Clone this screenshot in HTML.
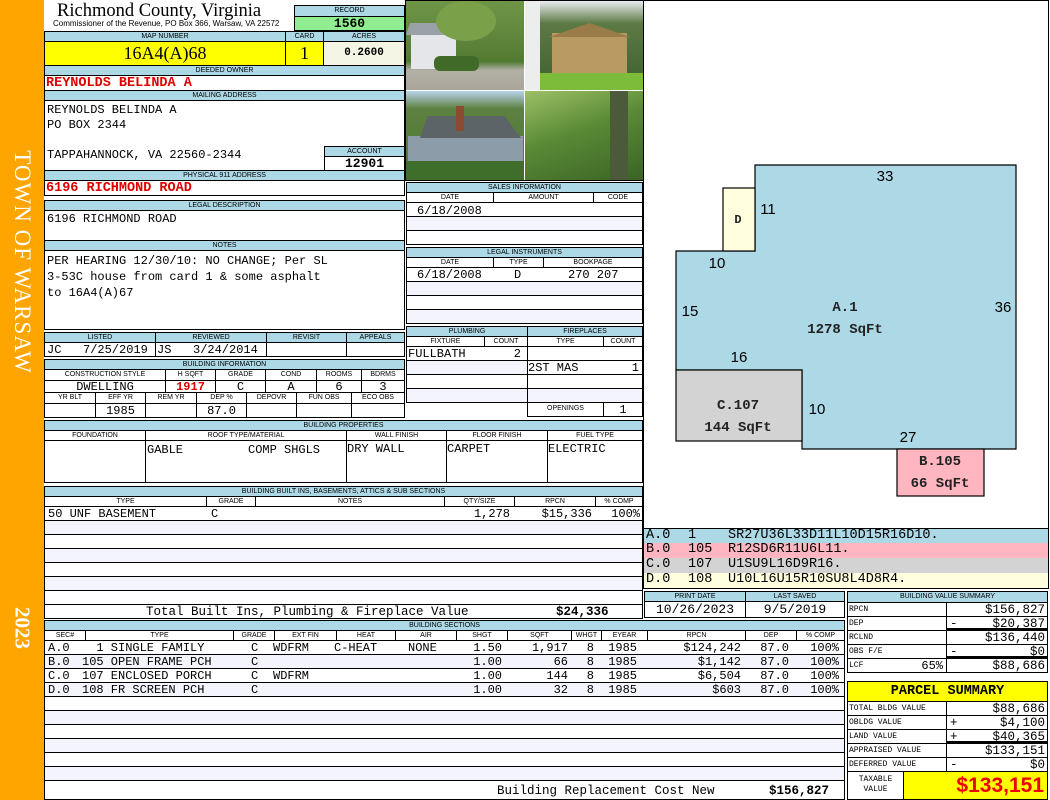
<!DOCTYPE html>
<html><head><meta charset="utf-8"><style>
*{box-sizing:border-box;margin:0;padding:0}
body{width:1050px;height:800px;position:relative;background:#fff;overflow:hidden;font-family:"Liberation Mono",monospace;font-size:12px;color:#000}
div,span{position:absolute}
.h{background:#add8e6;border:1px solid #000;font:7px "Liberation Sans",sans-serif;text-align:center;line-height:9px;height:11px;white-space:nowrap;overflow:hidden}
.c{border:1px solid #000;background:#fff;white-space:pre;line-height:13px;overflow:hidden;font-size:12px}
.s{font:7px "Liberation Sans",sans-serif;text-align:center;line-height:9px;border:1px solid #000;background:#fff;white-space:nowrap;overflow:hidden}
.r{text-align:right}.m{text-align:center}
.red{color:#d00;font-weight:bold}
.alt{background:#f4f4fc}
.row span{top:0;line-height:14px;white-space:pre}
.sl{font-size:8px;line-height:14px;padding-left:1px}
.sv{line-height:14px;padding-right:2px;font-size:12.5px;text-align:right}
</style></head><body>
<div style="left:0;top:0;width:44px;height:800px;background:#ffa500"></div>
<div style="left:22px;top:262px;transform:translate(-50%,-50%) rotate(90deg);color:#fff;font:23px 'Liberation Serif',serif;white-space:nowrap;letter-spacing:1px">TOWN OF WARSAW</div>
<div style="left:22px;top:628px;transform:translate(-50%,-50%) rotate(90deg);color:#fff;font:bold 21px 'Liberation Serif',serif">2023</div>

<!-- header -->
<div style="left:57px;top:0px;font:18.5px 'Liberation Serif',serif;line-height:22px;white-space:nowrap">Richmond County, Virginia</div>
<div style="left:53px;top:19px;font:8px 'Liberation Sans',sans-serif;white-space:nowrap">Commissioner of the Revenue, PO Box 366, Warsaw, VA 22572</div>
<div class="h" style="left:294px;top:5px;width:111px;height:12px">RECORD</div>
<div class="c m" style="left:294px;top:16px;width:111px;height:15px;background:#90ee90;font-weight:bold;line-height:13px;font-size:13px">1560</div>
<div class="h" style="left:44px;top:31px;width:242px">MAP NUMBER</div>
<div class="h" style="left:285px;top:31px;width:39px">CARD</div>
<div class="h" style="left:323px;top:31px;width:82px">ACRES</div>
<div class="c m" style="left:44px;top:41px;width:242px;height:25px;background:#ffff00;font:18px 'Liberation Serif',serif;line-height:23px">16A4(A)68</div>
<div class="c m" style="left:285px;top:41px;width:39px;height:25px;background:#ffff00;font:18px 'Liberation Serif',serif;line-height:23px">1</div>
<div class="c m" style="left:323px;top:41px;width:82px;height:25px;background:#f5f5e6;font-weight:bold;line-height:23px;font-size:11px">0.2600</div>
<div class="h" style="left:44px;top:65px;width:361px">DEEDED OWNER</div>
<div class="c red" style="left:44px;top:75px;width:361px;height:16px;line-height:16px;font-size:13.5px;padding-left:1px">REYNOLDS BELINDA A</div>
<div class="h" style="left:44px;top:90px;width:361px">MAILING ADDRESS</div>
<div class="c" style="left:44px;top:100px;width:361px;height:71px;line-height:15px;padding-top:2px;padding-left:2px">REYNOLDS BELINDA A
PO BOX 2344

TAPPAHANNOCK, VA 22560-2344</div>
<div class="h" style="left:324px;top:146px;width:81px">ACCOUNT</div>
<div class="c m" style="left:324px;top:156px;width:81px;height:15px;font-weight:bold;line-height:13px;font-size:13px">12901</div>
<div class="h" style="left:44px;top:170px;width:361px">PHYSICAL 911 ADDRESS</div>
<div class="c red" style="left:44px;top:180px;width:361px;height:16px;line-height:16px;font-size:13.5px;padding-left:1px">6196 RICHMOND ROAD</div>
<div class="h" style="left:44px;top:200px;width:361px">LEGAL DESCRIPTION</div>
<div class="c" style="left:44px;top:210px;width:361px;height:31px;padding:2px">6196 RICHMOND ROAD</div>
<div class="h" style="left:44px;top:240px;width:361px">NOTES</div>
<div class="c" style="left:44px;top:250px;width:361px;height:80px;padding:2px;line-height:16px">PER HEARING 12/30/10: NO CHANGE; Per SL
3-53C house from card 1 &amp; some asphalt
to 16A4(A)67</div>

<!-- listed -->
<div class="h" style="left:44px;top:332px;width:112px">LISTED</div>
<div class="h" style="left:155px;top:332px;width:112px">REVIEWED</div>
<div class="h" style="left:266px;top:332px;width:81px">REVISIT</div>
<div class="h" style="left:346px;top:332px;width:59px">APPEALS</div>
<div class="c" style="left:44px;top:342px;width:112px;height:15px;line-height:14px;padding-left:2px">JC   7/25/2019</div>
<div class="c" style="left:155px;top:342px;width:112px;height:15px;line-height:14px;padding-left:1px">JS   3/24/2014</div>
<div class="c" style="left:266px;top:342px;width:81px;height:15px"></div>
<div class="c" style="left:346px;top:342px;width:59px;height:15px"></div>
<div class="h" style="left:44px;top:359px;width:361px">BUILDING INFORMATION</div>
<div class="s" style="left:44px;top:369px;width:122px;height:12px">CONSTRUCTION STYLE</div>
<div class="s" style="left:165px;top:369px;width:51px;height:12px">H SQFT</div>
<div class="s" style="left:215px;top:369px;width:51px;height:12px">GRADE</div>
<div class="s" style="left:265px;top:369px;width:52px;height:12px">COND</div>
<div class="s" style="left:316px;top:369px;width:46px;height:12px">ROOMS</div>
<div class="s" style="left:361px;top:369px;width:44px;height:12px">BDRMS</div>
<div class="c m" style="left:44px;top:380px;width:122px;height:13px;line-height:12px">DWELLING</div>
<div class="c m red" style="left:165px;top:380px;width:51px;height:13px;line-height:12px">1917</div>
<div class="c m" style="left:215px;top:380px;width:51px;height:13px;line-height:12px">C</div>
<div class="c m" style="left:265px;top:380px;width:52px;height:13px;line-height:12px">A</div>
<div class="c m" style="left:316px;top:380px;width:46px;height:13px;line-height:12px">6</div>
<div class="c m" style="left:361px;top:380px;width:44px;height:13px;line-height:12px">3</div>
<div class="s" style="left:44px;top:392px;width:52px;height:12px">YR BLT</div>
<div class="s" style="left:95px;top:392px;width:51px;height:12px">EFF YR</div>
<div class="s" style="left:145px;top:392px;width:52px;height:12px">REM YR</div>
<div class="s" style="left:196px;top:392px;width:51px;height:12px">DEP %</div>
<div class="s" style="left:246px;top:392px;width:51px;height:12px">DEPOVR</div>
<div class="s" style="left:296px;top:392px;width:56px;height:12px">FUN OBS</div>
<div class="s" style="left:351px;top:392px;width:54px;height:12px">ECO OBS</div>
<div class="c" style="left:44px;top:403px;width:52px;height:15px"></div>
<div class="c m" style="left:95px;top:403px;width:51px;height:15px;line-height:14px">1985</div>
<div class="c" style="left:145px;top:403px;width:52px;height:15px"></div>
<div class="c m" style="left:196px;top:403px;width:51px;height:15px;line-height:14px">87.0</div>
<div class="c" style="left:246px;top:403px;width:51px;height:15px"></div>
<div class="c" style="left:296px;top:403px;width:56px;height:15px"></div>
<div class="c" style="left:351px;top:403px;width:54px;height:15px"></div>

<!-- photos -->
<div style="left:405px;top:0;width:239px;height:181px;background:#fff;border:1px solid #000"></div>
<div style="left:406px;top:1px;width:118px;height:89px;overflow:hidden;background:linear-gradient(180deg,#6f9548 0%,#5a8038 55%,#4f7a30 68%,#b3b0a6 78%,#a9a59a 100%)">
 <div style="left:5px;top:30px;width:45px;height:38px;background:#e4e6ea"></div>
 <div style="left:2px;top:22px;width:55px;height:12px;background:#9aa0a8;transform:skewX(-20deg)"></div>
 <div style="left:30px;top:0;width:60px;height:40px;background:#7aa04a;border-radius:50%"></div>
 <div style="left:28px;top:55px;width:45px;height:15px;background:#3f6a28;border-radius:6px"></div>
</div>
<div style="left:525px;top:1px;width:118px;height:89px;overflow:hidden;background:linear-gradient(180deg,#e8ecef 0%,#5d7a45 25%,#3f5f30 100%)">
 <div style="left:0;top:0;width:15px;height:89px;background:#eceeee"></div>
 <div style="left:27px;top:32px;width:75px;height:50px;background:#b89a62"></div>
 <div style="left:24px;top:22px;width:81px;height:14px;background:#9a7c48;clip-path:polygon(0 100%,50% 0,100% 100%)"></div>
 <div style="left:15px;top:72px;width:103px;height:17px;background:#7dbb3a"></div>
</div>
<div style="left:406px;top:91px;width:118px;height:89px;overflow:hidden;background:linear-gradient(180deg,#b8d4ea 0%,#5d8040 20%,#4d7a32 100%)">
 <div style="left:2px;top:45px;width:115px;height:30px;background:#8c9ca8"></div>
 <div style="left:5px;top:25px;width:110px;height:22px;background:#5d6468;clip-path:polygon(8% 100%,15% 0,85% 0,100% 100%)"></div>
 <div style="left:50px;top:15px;width:8px;height:25px;background:#8b4a32"></div>
 <div style="left:0;top:70px;width:118px;height:19px;background:#3e6e2a"></div>
</div>
<div style="left:525px;top:91px;width:118px;height:89px;background:linear-gradient(160deg,#9cc066,#5a8a36 45%,#3a6424)">
 <div style="left:85px;top:0;width:18px;height:89px;background:#4a5a3a"></div>
</div>

<!-- sales -->
<div style="left:405px;top:181px;width:239px;height:240px;background:#fff"></div>
<div class="h" style="left:406px;top:182px;width:237px">SALES INFORMATION</div>
<div class="s" style="left:406px;top:192px;width:88px;height:11px">DATE</div>
<div class="s" style="left:493px;top:192px;width:101px;height:11px">AMOUNT</div>
<div class="s" style="left:593px;top:192px;width:50px;height:11px">CODE</div>
<div class="c" style="left:406px;top:202px;width:237px;height:15px;padding-left:10px;line-height:16px">6/18/2008</div>
<div class="c alt" style="left:406px;top:216px;width:237px;height:15px"></div>
<div class="c" style="left:406px;top:230px;width:237px;height:15px"></div>
<div class="h" style="left:406px;top:247px;width:237px">LEGAL INSTRUMENTS</div>
<div class="s" style="left:406px;top:257px;width:88px;height:11px">DATE</div>
<div class="s" style="left:493px;top:257px;width:51px;height:11px">TYPE</div>
<div class="s" style="left:543px;top:257px;width:100px;height:11px">BOOKPAGE</div>
<div class="c row" style="left:406px;top:267px;width:237px;height:15px"><span style="left:10px">6/18/2008</span><span style="left:107px">D</span><span style="left:161px">270 207</span></div>
<div class="c alt" style="left:406px;top:281px;width:237px;height:15px"></div>
<div class="c" style="left:406px;top:295px;width:237px;height:15px"></div>
<div class="c alt" style="left:406px;top:309px;width:237px;height:15px"></div>
<!-- plumbing -->
<div class="h" style="left:406px;top:326px;width:122px">PLUMBING</div>
<div class="h" style="left:527px;top:326px;width:116px">FIREPLACES</div>
<div class="s" style="left:406px;top:336px;width:79px;height:11px">FIXTURE</div>
<div class="s" style="left:484px;top:336px;width:44px;height:11px">COUNT</div>
<div class="s" style="left:527px;top:336px;width:77px;height:11px">TYPE</div>
<div class="s" style="left:603px;top:336px;width:40px;height:11px">COUNT</div>
<div class="c row" style="left:406px;top:346px;width:122px;height:15px"><span style="left:1px">FULLBATH</span><span style="right:6px">2</span></div>
<div class="c alt" style="left:406px;top:360px;width:122px;height:15px"></div>
<div class="c" style="left:406px;top:374px;width:122px;height:15px"></div>
<div class="c alt" style="left:406px;top:388px;width:122px;height:15px"></div>
<div class="c" style="left:527px;top:346px;width:116px;height:15px"></div>
<div class="c row" style="left:527px;top:360px;width:116px;height:15px"><span style="left:0">2ST MAS</span><span style="right:3px">1</span></div>
<div class="c" style="left:527px;top:374px;width:116px;height:15px"></div>
<div class="c alt" style="left:527px;top:388px;width:116px;height:15px"></div>
<div class="s" style="left:527px;top:402px;width:77px;height:15px;line-height:12px">OPENINGS</div>
<div class="c m" style="left:603px;top:402px;width:40px;height:15px;line-height:14px">1</div>

<!-- building properties -->
<div class="h" style="left:44px;top:420px;width:599px">BUILDING PROPERTIES</div>
<div class="s" style="left:44px;top:430px;width:102px;height:11px">FOUNDATION</div>
<div class="s" style="left:145px;top:430px;width:202px;height:11px">ROOF TYPE/MATERIAL</div>
<div class="s" style="left:346px;top:430px;width:101px;height:11px">WALL FINISH</div>
<div class="s" style="left:446px;top:430px;width:102px;height:11px">FLOOR FINISH</div>
<div class="s" style="left:547px;top:430px;width:96px;height:11px">FUEL TYPE</div>
<div class="c" style="left:44px;top:440px;width:102px;height:43px"></div>
<div class="c row" style="left:145px;top:440px;width:202px;height:43px"><span style="left:1px;top:2px">GABLE</span><span style="left:102px;top:2px">COMP SHGLS</span></div>
<div class="c" style="left:346px;top:440px;width:101px;height:43px;padding-top:2px">DRY WALL</div>
<div class="c" style="left:446px;top:440px;width:102px;height:43px;padding-top:2px">CARPET</div>
<div class="c" style="left:547px;top:440px;width:96px;height:43px;padding-top:2px">ELECTRIC</div>

<!-- built ins -->
<div class="h" style="left:44px;top:486px;width:599px">BUILDING BUILT INS, BASEMENTS, ATTICS &amp; SUB SECTIONS</div>
<div class="s" style="left:44px;top:496px;width:163px;height:11px">TYPE</div>
<div class="s" style="left:206px;top:496px;width:50px;height:11px">GRADE</div>
<div class="s" style="left:255px;top:496px;width:190px;height:11px">NOTES</div>
<div class="s" style="left:444px;top:496px;width:71px;height:11px">QTY/SIZE</div>
<div class="s" style="left:514px;top:496px;width:82px;height:11px">RPCN</div>
<div class="s" style="left:595px;top:496px;width:48px;height:11px">% COMP</div>
<div class="c row" style="left:44px;top:506px;width:599px;height:15px"><span style="left:3px">50 UNF BASEMENT</span><span style="left:166px">C</span><span style="right:132px">1,278</span><span style="right:50px">$15,336</span><span style="right:2px">100%</span></div>
<div class="c alt" style="left:44px;top:520px;width:599px;height:15px"></div>
<div class="c" style="left:44px;top:534px;width:599px;height:15px"></div>
<div class="c alt" style="left:44px;top:548px;width:599px;height:15px"></div>
<div class="c" style="left:44px;top:562px;width:599px;height:15px"></div>
<div class="c alt" style="left:44px;top:576px;width:599px;height:15px"></div>
<div class="c" style="left:44px;top:590px;width:599px;height:15px"></div>
<div class="c row" style="left:44px;top:604px;width:599px;height:15px;font-size:12.5px"><span style="left:101px">Total Built Ins, Plumbing &amp; Fireplace Value</span><b style="position:absolute;left:511px;line-height:14px">$24,336</b></div>

<!-- building sections -->
<div class="h" style="left:44px;top:620px;width:801px">BUILDING SECTIONS</div>
<div class="s" style="left:44px;top:630px;width:42px;height:11px">SEC#</div>
<div class="s" style="left:85px;top:630px;width:149px;height:11px">TYPE</div>
<div class="s" style="left:233px;top:630px;width:42px;height:11px">GRADE</div>
<div class="s" style="left:274px;top:630px;width:63px;height:11px">EXT FIN</div>
<div class="s" style="left:336px;top:630px;width:60px;height:11px">HEAT</div>
<div class="s" style="left:395px;top:630px;width:62px;height:11px">AIR</div>
<div class="s" style="left:456px;top:630px;width:52px;height:11px">SHGT</div>
<div class="s" style="left:507px;top:630px;width:65px;height:11px">SQFT</div>
<div class="s" style="left:571px;top:630px;width:31px;height:11px">WHGT</div>
<div class="s" style="left:601px;top:630px;width:47px;height:11px">EYEAR</div>
<div class="s" style="left:647px;top:630px;width:99px;height:11px">RPCN</div>
<div class="s" style="left:745px;top:630px;width:52px;height:11px">DEP</div>
<div class="s" style="left:796px;top:630px;width:49px;height:11px">% COMP</div>
<div class="c row" style="left:44px;top:640px;width:801px;height:15px"><span style="left:3px">A.0</span><span style="left:37px">  1 SINGLE FAMILY</span><span style="left:206px">C</span><span style="left:228px">WDFRM</span><span style="left:289px">C-HEAT</span><span style="left:363px">NONE</span><span style="right:342px">1.50</span><span style="right:276px">1,917</span><span style="right:250px">8</span><span style="right:207px">1985</span><span style="right:103px">$124,242</span><span style="right:55px">87.0</span><span style="right:5px">100%</span></div>
<div class="c row alt" style="left:44px;top:654px;width:801px;height:15px"><span style="left:3px">B.0</span><span style="left:37px">105 OPEN FRAME PCH</span><span style="left:206px">C</span><span style="right:342px">1.00</span><span style="right:276px">66</span><span style="right:250px">8</span><span style="right:207px">1985</span><span style="right:103px">$1,142</span><span style="right:55px">87.0</span><span style="right:5px">100%</span></div>
<div class="c row" style="left:44px;top:668px;width:801px;height:15px"><span style="left:3px">C.0</span><span style="left:37px">107 ENCLOSED PORCH</span><span style="left:206px">C</span><span style="left:228px">WDFRM</span><span style="right:342px">1.00</span><span style="right:276px">144</span><span style="right:250px">8</span><span style="right:207px">1985</span><span style="right:103px">$6,504</span><span style="right:55px">87.0</span><span style="right:5px">100%</span></div>
<div class="c row alt" style="left:44px;top:682px;width:801px;height:15px"><span style="left:3px">D.0</span><span style="left:37px">108 FR SCREEN PCH</span><span style="left:206px">C</span><span style="right:342px">1.00</span><span style="right:276px">32</span><span style="right:250px">8</span><span style="right:207px">1985</span><span style="right:103px">$603</span><span style="right:55px">87.0</span><span style="right:5px">100%</span></div>
<div class="c" style="left:44px;top:696px;width:801px;height:15px"></div>
<div class="c alt" style="left:44px;top:710px;width:801px;height:15px"></div>
<div class="c" style="left:44px;top:724px;width:801px;height:15px"></div>
<div class="c alt" style="left:44px;top:738px;width:801px;height:15px"></div>
<div class="c" style="left:44px;top:752px;width:801px;height:15px"></div>
<div class="c alt" style="left:44px;top:766px;width:801px;height:15px"></div>
<div class="c row" style="left:44px;top:780px;width:801px;height:20px;font-size:12.5px"><span style="left:452px;line-height:21px">Building Replacement Cost New</span><b style="position:absolute;left:724px;line-height:21px">$156,827</b></div>

<!-- sketch -->
<div style="left:643px;top:0;width:406px;height:529px;border:1px solid #000;background:#fff"></div>
<svg style="position:absolute;left:0;top:0" width="1050" height="530">
<polygon points="755,165 1016,165 1016,449 802,449 802,370 676,370 676,251 755,251" fill="#add8e6" stroke="#000" stroke-width="1.2"/>
<rect x="723" y="188" width="32" height="63" fill="#ffffe0" stroke="#000" stroke-width="1.2"/>
<rect x="676" y="370" width="126" height="71" fill="#d3d3d3" stroke="#000" stroke-width="1.2"/>
<rect x="897" y="449" width="87" height="47" fill="#ffb6c1" stroke="#000" stroke-width="1.2"/>
<g font-family="Liberation Sans,sans-serif" font-size="15" text-anchor="middle">
<text x="885" y="181">33</text><text x="768" y="214">11</text><text x="717" y="268">10</text>
<text x="690" y="316">15</text><text x="1003" y="312">36</text><text x="739" y="362">16</text>
<text x="817" y="414">10</text><text x="908" y="442">27</text></g>
<g font-family="Liberation Mono,monospace" font-size="14" font-weight="bold" text-anchor="middle" fill="#222">
<text x="738" y="223" font-size="12">D</text>
<text x="845" y="311">A.1</text><text x="845" y="333">1278 SqFt</text>
<text x="738" y="409">C.107</text><text x="738" y="431">144 SqFt</text>
<text x="940" y="465">B.105</text><text x="940" y="487">66 SqFt</text></g>
</svg>
<div class="c row" style="left:643px;top:528px;width:406px;height:15px;background:#add8e6;font-size:13.5px;border-bottom:0"><span style="left:2px">A.0</span><span style="left:44px">1</span><span style="left:84px">SR27U36L33D11L10D15R16D10.</span></div>
<div class="c row" style="left:643px;top:543px;width:406px;height:15px;background:#ffb6c1;font-size:13.5px;border-top:0;border-bottom:0"><span style="left:2px">B.0</span><span style="left:44px">105</span><span style="left:84px">R12SD6R11U6L11.</span></div>
<div class="c row" style="left:643px;top:558px;width:406px;height:15px;background:#d3d3d3;font-size:13.5px;border-top:0;border-bottom:0"><span style="left:2px">C.0</span><span style="left:44px">107</span><span style="left:84px">U1SU9L16D9R16.</span></div>
<div class="c row" style="left:643px;top:573px;width:406px;height:16px;background:#ffffe0;font-size:13.5px;border-top:0"><span style="left:2px">D.0</span><span style="left:44px">108</span><span style="left:84px">U10L16U15R10SU8L4D8R4.</span></div>

<div class="h" style="left:644px;top:591px;width:102px">PRINT DATE</div>
<div class="h" style="left:745px;top:591px;width:100px">LAST SAVED</div>
<div class="c m" style="left:644px;top:601px;width:102px;height:17px;line-height:16px;font-size:13px">10/26/2023</div>
<div class="c m" style="left:745px;top:601px;width:100px;height:17px;line-height:16px;font-size:13px">9/5/2019</div>

<div class="h" style="left:847px;top:591px;width:201px;height:12px">BUILDING VALUE SUMMARY</div>
<div class="c sl" style="left:847px;top:602px;width:100px;height:15px">RPCN</div>
<div class="c sv" style="left:946px;top:602px;width:102px;height:15px">$156,827</div>
<div class="c sl" style="left:847px;top:616px;width:100px;height:15px">DEP</div>
<div class="c sv" style="left:946px;top:616px;width:102px;height:15px;border-bottom:3px solid #000"><span style="left:3px">-</span>$20,387</div>
<div class="c sl" style="left:847px;top:630px;width:100px;height:15px">RCLND</div>
<div class="c sv" style="left:946px;top:630px;width:102px;height:15px">$136,440</div>
<div class="c sl" style="left:847px;top:644px;width:100px;height:15px">OBS F/E</div>
<div class="c sv" style="left:946px;top:644px;width:102px;height:15px;border-bottom:3px solid #000"><span style="left:3px">-</span>$0</div>
<div class="c sl" style="left:847px;top:658px;width:100px;height:15px">LCF<span style="right:3px;font-size:12px;top:0">65%</span></div>
<div class="c sv" style="left:946px;top:658px;width:102px;height:15px">$88,686</div>

<div class="c m" style="left:847px;top:681px;width:201px;height:21px;background:#ffff00;font-weight:bold;font-size:13.5px;line-height:19px">PARCEL SUMMARY</div>
<div class="c sl" style="left:847px;top:701px;width:100px;height:15px">TOTAL BLDG VALUE</div>
<div class="c sv" style="left:946px;top:701px;width:102px;height:15px">$88,686</div>
<div class="c sl" style="left:847px;top:715px;width:100px;height:15px">OBLDG VALUE</div>
<div class="c sv" style="left:946px;top:715px;width:102px;height:15px"><span style="left:3px">+</span>$4,100</div>
<div class="c sl" style="left:847px;top:729px;width:100px;height:15px">LAND VALUE</div>
<div class="c sv" style="left:946px;top:729px;width:102px;height:15px;border-bottom:3px solid #000"><span style="left:3px">+</span>$40,365</div>
<div class="c sl" style="left:847px;top:743px;width:100px;height:15px">APPRAISED VALUE</div>
<div class="c sv" style="left:946px;top:743px;width:102px;height:15px">$133,151</div>
<div class="c sl" style="left:847px;top:757px;width:100px;height:15px">DEFERRED VALUE</div>
<div class="c sv" style="left:946px;top:757px;width:102px;height:15px"><span style="left:3px">-</span>$0</div>
<div class="c m" style="left:847px;top:771px;width:57px;height:29px;font-size:8px;line-height:10px;padding-top:3px">TAXABLE
VALUE</div>
<div class="c r" style="left:903px;top:771px;width:145px;height:29px;background:#ffff00;color:#e00;font:bold 21px 'Liberation Sans',sans-serif;line-height:27px;padding-right:3px">$133,151</div>
</body></html>
